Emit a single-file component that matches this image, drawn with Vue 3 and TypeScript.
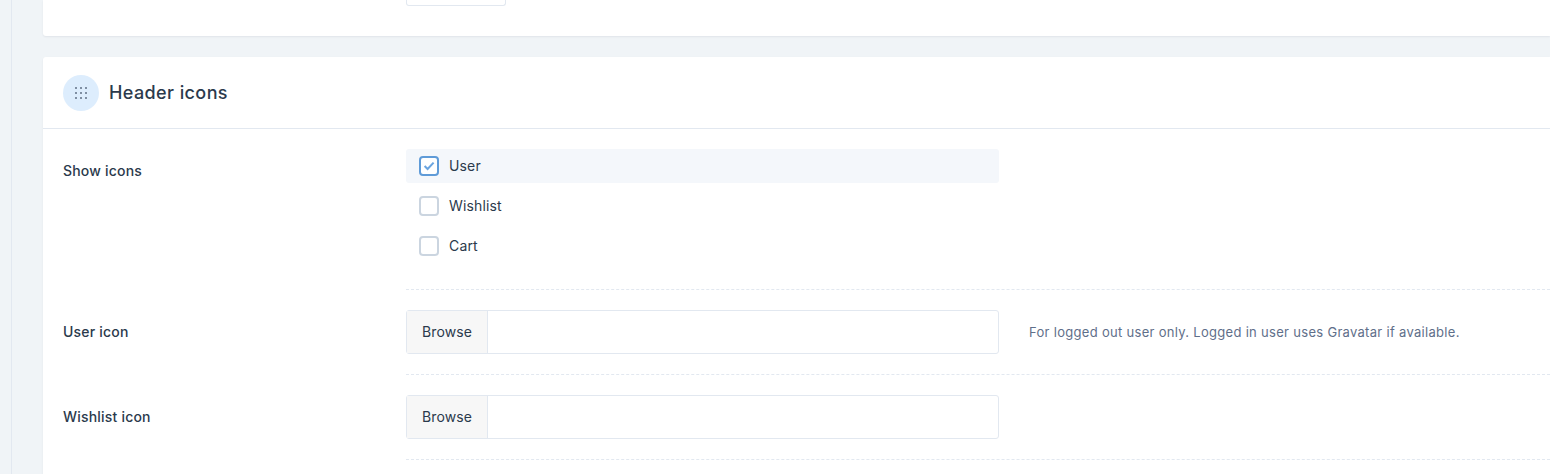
<script setup lang="ts">
const showIcons = [
  { label: 'User', checked: true },
  { label: 'Wishlist', checked: false },
  { label: 'Cart', checked: false },
];

const uploads = [
  { label: 'User icon', hint: 'For logged out user only. Logged in user uses Gravatar if available.' },
  { label: 'Wishlist icon', hint: '' },
];

const dots = [0, 1, 2].flatMap((y) => [0, 1, 2].map((x) => ({ x: x * 5, y: y * 5 })));
</script>

<template>
  <div class="page">
    <div class="rail"></div>
    <main class="main">
      <section class="card card-top">
        <div class="stub"></div>
      </section>

      <section class="card">
        <header class="card-head">
          <span class="head-icon">
            <svg width="12" height="12" viewBox="0 0 12 12">
              <rect v-for="(d, i) in dots" :key="i" :x="d.x" :y="d.y" width="2" height="2" fill="#7f8fa3" />
            </svg>
          </span>
          <h2 class="card-title">Header icons</h2>
        </header>

        <div class="row">
          <div class="label label-checks">Show icons</div>
          <div class="field field-checks">
            <label v-for="item in showIcons" :key="item.label" class="check" :class="{ active: item.checked }">
              <span class="box" :class="{ on: item.checked }">
                <svg v-if="item.checked" width="16" height="16" viewBox="0 0 16 16">
                  <path d="M3.6 8 6.6 11 12.6 4.6" fill="none" stroke="#6ba5e0" stroke-width="2" />
                </svg>
              </span>
              <span>{{ item.label }}</span>
            </label>
          </div>
        </div>

        <div v-for="item in uploads" :key="item.label" class="row">
          <div class="label label-upload">{{ item.label }}</div>
          <div class="field field-upload">
            <div class="file">
              <span class="browse">Browse</span>
            </div>
            <span v-if="item.hint" class="hint">{{ item.hint }}</span>
          </div>
        </div>
      </section>
    </main>
  </div>
</template>

<style>
html,
body {
  margin: 0;
  height: 100%;
  overflow: hidden;
  background: #f0f4f7;
}
</style>

<style scoped>
.page {
  display: flex;
  height: 474px;
  overflow: hidden;
  background: #f0f4f7;
  font-family: "Inter", "Noto Sans", sans-serif;
  color: #2b3a4c;
}

.rail {
  flex: none;
  width: 11px;
  border-right: 1px solid #e2e8f0;
}

.main {
  flex: 1;
  padding-left: 31px;
  min-width: 0;
}

.card {
  background: #fff;
  border-radius: 3px 0 0 3px;
  box-shadow: 0 1px 2px rgba(45, 55, 72, 0.08);
  margin-bottom: 21px;
  padding-bottom: 40px;
}

.card-top {
  height: 36px;
  padding: 0 0 0 363px;
  box-sizing: border-box;
  border-radius: 0 0 0 3px;
}

.stub {
  width: 98px;
  height: 5px;
  border: 1px solid #e2e8f0;
  border-top: none;
  border-radius: 0 0 3px 3px;
}

.card-head {
  display: flex;
  align-items: center;
  gap: 10px;
  height: 71px;
  padding-left: 20px;
  border-bottom: 1px solid #e2e8f0;
}

.head-icon {
  display: flex;
  align-items: center;
  justify-content: center;
  width: 36px;
  height: 36px;
  border-radius: 50%;
  background: #ddedfd;
}

.card-title {
  margin: 0;
  font-size: 18px;
  font-weight: 500;
  letter-spacing: 0.4px;
}

.row {
  display: flex;
  padding-left: 20px;
}

.label {
  flex: none;
  width: 343px;
  font-size: 14px;
  font-weight: 500;
  line-height: 20px;
  letter-spacing: 0.2px;
}

.label-checks {
  padding-top: 32px;
}

.label-upload {
  padding-top: 32px;
}

.field {
  flex: 1;
  border-bottom: 1px dashed #e2e8f0;
}

.field-checks {
  display: flex;
  flex-direction: column;
  gap: 6px;
  padding: 20px 0 26px;
}

.check {
  display: flex;
  align-items: center;
  gap: 10px;
  width: 593px;
  height: 34px;
  box-sizing: border-box;
  padding-left: 13px;
  padding-bottom: 1px;
  border-radius: 3px;
  font-size: 14px;
  letter-spacing: 0.15px;
}

.check.active {
  background: #f4f7fb;
}

.box {
  display: flex;
  align-items: center;
  justify-content: center;
  width: 20px;
  height: 20px;
  margin-top: 1px;
  box-sizing: border-box;
  border: 2px solid #cbd5e0;
  border-radius: 4px;
  background: #fff;
}

.box.on {
  border-color: #5f9bd8;
}

.field-upload {
  display: flex;
  align-items: center;
  gap: 30px;
  padding: 20px 0;
}

.file {
  display: flex;
  flex: none;
  width: 593px;
  height: 44px;
  box-sizing: border-box;
  border: 1px solid #e2e8f0;
  border-radius: 3px;
}

.browse {
  display: flex;
  align-items: center;
  justify-content: center;
  width: 80px;
  padding-bottom: 1px;
  background: #f7f7f7;
  border-right: 1px solid #e2e8f0;
  font-size: 14px;
  letter-spacing: 0.1px;
}

.hint {
  font-size: 13px;
  letter-spacing: 0.3px;
  color: #5f6f8a;
  margin-bottom: 1px;
}
</style>
